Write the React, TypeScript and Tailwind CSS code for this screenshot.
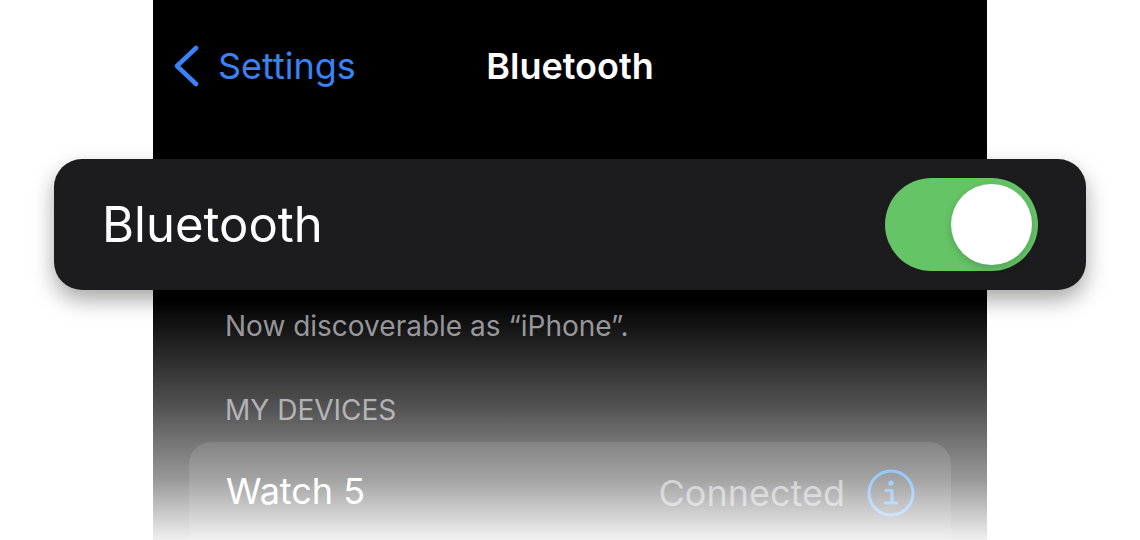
import React from "react";

const font = { fontFamily: "Inter, 'Noto Sans', sans-serif" };

function Toggle() {
  return (
    <div className="w-[153px] h-[93px] rounded-full bg-[#65c466] flex items-center justify-end pr-[6px]">
      <div className="w-[81px] h-[81px] rounded-full bg-white shadow-[0_3px_8px_rgba(0,0,0,0.18)]" />
    </div>
  );
}

function InfoIcon() {
  return (
    <svg width="48" height="48" viewBox="0 0 48 48" fill="none">
      <circle cx="24" cy="24" r="22" stroke="#0a84ff" strokeWidth="3" />
      <circle cx="24" cy="14" r="2.6" fill="#0a84ff" />
      <path d="M19 21.5h6v12.5M18.5 34h11" stroke="#0a84ff" strokeWidth="3" strokeLinecap="round" strokeLinejoin="round" />
    </svg>
  );
}

export default function App() {
  return (
    <div className="w-[1140px] h-[540px] bg-white overflow-hidden" style={font}>
      <div className="relative ml-[153px] w-[834px] h-[540px] bg-black">
        {/* nav bar */}
        <div className="grid grid-cols-[1fr_auto_1fr] items-center h-[132px]">
          <div className="flex items-center gap-[18px] pl-[20px] text-[#3a82f7]">
            <svg width="27" height="42" viewBox="0 0 27 42" fill="none">
              <path d="M23 3L4 21l19 18" stroke="#3a82f7" strokeWidth="4.5" strokeLinecap="round" strokeLinejoin="round" />
            </svg>
            <span className="text-[36px] leading-none">Settings</span>
          </div>
          <div className="text-white text-[36px] font-semibold leading-none">Bluetooth</div>
          <div />
        </div>

        {/* floating row */}
        <div className="relative z-10 mx-[-99px] mt-[27px] h-[131px] rounded-[28px] bg-[#1c1c1e] shadow-[0_10px_22px_rgba(0,0,0,0.35)] flex items-center justify-between pl-[48px] pr-[48px]">
          <span className="text-white text-[49px] leading-none">Bluetooth</span>
          <Toggle />
        </div>

        <div className="pl-[72px] pt-[16px] text-[#8e8e93] text-[28px] leading-[40px]">
          Now discoverable as “iPhone”.
        </div>

        <div className="pl-[72px] pt-[44px] text-[#8e8e93] text-[28px] leading-[40px] uppercase">
          My Devices
        </div>

        <div className="mx-[36px] mt-[12px] h-[120px] rounded-[22px] bg-[#1c1c1e] flex items-start justify-between pl-[37px] pr-[36px] pt-[27px]">
          <span className="text-white text-[36px] leading-[44px]">Watch 5</span>
          <div className="flex items-center gap-[22px]">
            <span className="text-[#8e8e93] text-[36px] leading-[44px]">Connected</span>
            <InfoIcon />
          </div>
        </div>

        {/* fade to white */}
        <div className="pointer-events-none absolute left-0 right-0 top-[300px] bottom-0 z-20 bg-[linear-gradient(to_bottom,rgba(255,255,255,0)_0%,rgba(255,255,255,0.3)_42%,rgba(255,255,255,0.6)_75%,rgba(255,255,255,0.94)_100%)]" />
      </div>
    </div>
  );
}
